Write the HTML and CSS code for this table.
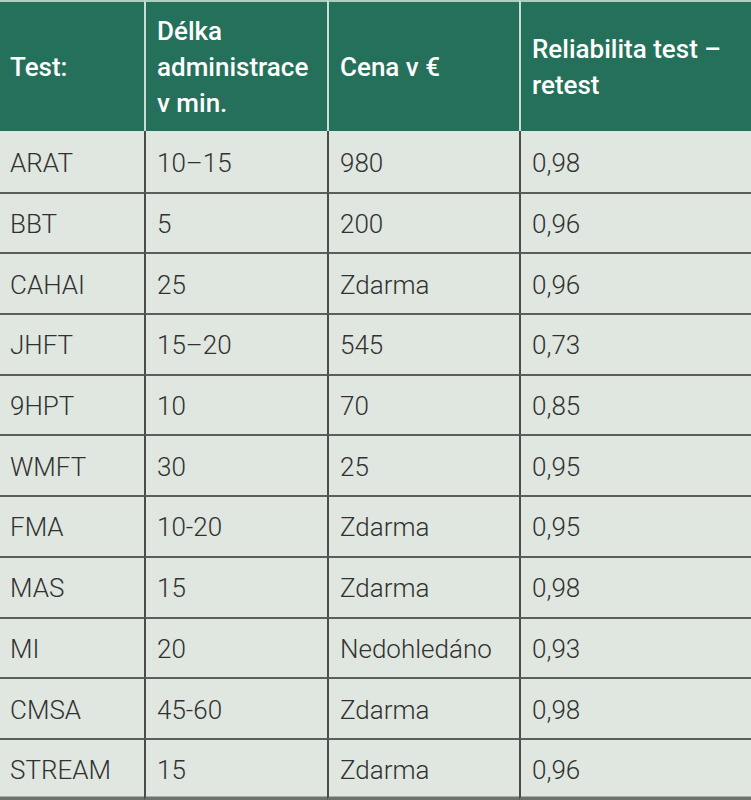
FILE: index.html
```html
<!DOCTYPE html>
<html lang="cs">
<head>
<meta charset="utf-8">
<title>Tabulka testů</title>
<link rel="stylesheet" href="styles.css">
</head>
<body>
<div class="tbl">
  <div class="th first">Test:</div>
  <div class="th">Délka<br>administrace<br>v min.</div>
  <div class="th">Cena v €</div>
  <div class="th">Reliabilita test –<br>retest</div>

  <div class="td first top">ARAT</div><div class="td top">10–15</div><div class="td top">980</div><div class="td top">0,98</div>
  <div class="td first">BBT</div><div class="td">5</div><div class="td">200</div><div class="td">0,96</div>
  <div class="td first">CAHAI</div><div class="td">25</div><div class="td">Zdarma</div><div class="td">0,96</div>
  <div class="td first">JHFT</div><div class="td">15–20</div><div class="td">545</div><div class="td">0,73</div>
  <div class="td first">9HPT</div><div class="td">10</div><div class="td">70</div><div class="td">0,85</div>
  <div class="td first">WMFT</div><div class="td">30</div><div class="td">25</div><div class="td">0,95</div>
  <div class="td first">FMA</div><div class="td">10-20</div><div class="td">Zdarma</div><div class="td">0,95</div>
  <div class="td first">MAS</div><div class="td">15</div><div class="td">Zdarma</div><div class="td">0,98</div>
  <div class="td first">MI</div><div class="td">20</div><div class="td">Nedohledáno</div><div class="td">0,93</div>
  <div class="td first">CMSA</div><div class="td">45-60</div><div class="td">Zdarma</div><div class="td">0,98</div>
  <div class="td first last">STREAM</div><div class="td last">15</div><div class="td last">Zdarma</div><div class="td last">0,96</div>
</div>
</body>
</html>
```
FILE: styles.css
```css
html, body {
  margin: 0;
  padding: 0;
  background: #e0e6e0;
}
.tbl {
  display: grid;
  grid-template-columns: 144px 183px 192px 1fr;
  grid-template-rows: 131px repeat(10, 60.7px) 62.3px;
  width: 751px;
  height: 800px;
  font-family: Roboto, "Liberation Sans", sans-serif;
  font-size: 26px;
}
.th {
  box-sizing: border-box;
  background: #25705a;
  color: #ffffff;
  font-weight: 500;
  line-height: 36px;
  display: flex;
  align-items: center;
  padding: 0 8px 0 11px;
  border-top: 2px solid #b6cac0;
  border-left: 2px solid #cadcd3;
}
.th.first {
  border-left: none;
  padding-left: 10px;
}
.td {
  box-sizing: border-box;
  background: #e0e6e0;
  color: #303230;
  font-weight: 300;
  display: flex;
  align-items: center;
  padding: 2px 8px 0 11px;
  border-top: 2px solid #5c5e5c;
  border-left: 2px solid #4a4c4a;
}
.td.first {
  border-left: none;
  padding-left: 10px;
}
.td.top {
  border-top: none;
  padding-top: 4px;
}
.td.last {
  border-bottom: 3px solid #6f716f;
  box-shadow: inset 0 -1px 0 #a9ada9;
}
```
